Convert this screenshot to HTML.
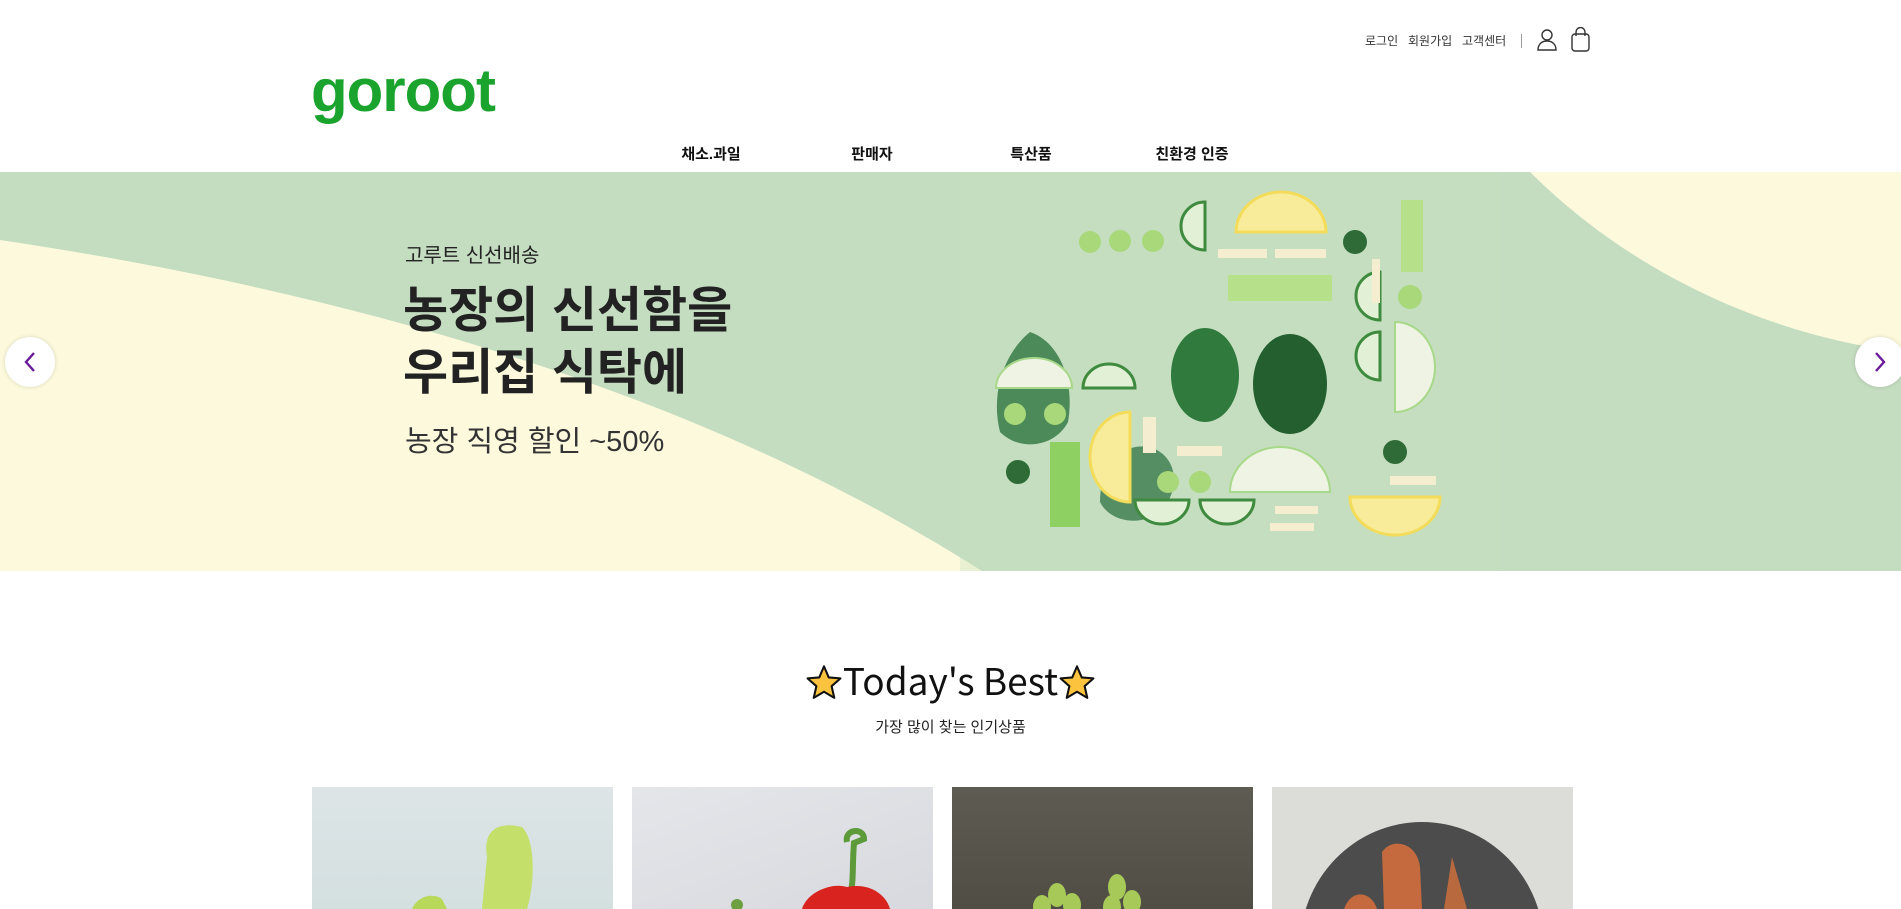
<!DOCTYPE html>
<html><head><meta charset="utf-8">
<style>
*{margin:0;padding:0;box-sizing:border-box}
html,body{width:1901px;height:909px;overflow:hidden}
body{background:#fff;font-family:"Liberation Sans","Noto Sans CJK KR",sans-serif;color:#222;position:relative}
.abs{position:absolute}
.util{top:32px;font-size:12px;color:#333;white-space:nowrap}
.logo{left:311px;top:56px;font-size:60px;line-height:70px;font-weight:bold;color:#1aa32d;letter-spacing:-1px;font-family:"Liberation Sans",sans-serif}
.nav{top:143px;font-size:15px;font-weight:bold;color:#111;transform:translateX(-50%);white-space:nowrap}
.banner{left:0;top:172px;width:1901px;height:399px;background:#c4dcc0;overflow:hidden}
.btn{width:50px;height:50px;border-radius:50%;background:#fff;box-shadow:0 0 4px rgba(0,0,0,.15);top:337px}
.card{top:787px;width:301px;height:122px;overflow:hidden}
</style></head><body>
<div class="abs util" style="left:1365px">로그인</div>
<div class="abs util" style="left:1408px">회원가입</div>
<div class="abs util" style="left:1462px">고객센터</div>
<div class="abs" style="left:1521px;top:34px;width:1px;height:14px;background:#999"></div>
<svg class="abs" style="left:1536px;top:28px" width="22" height="24" viewBox="0 0 22 24" fill="none" stroke="#333" stroke-width="1.4"><circle cx="11" cy="7" r="5"/><path d="M2 22c0-6 4-9 9-9s9 3 9 9z"/></svg>
<svg class="abs" style="left:1571px;top:27px" width="19" height="25" viewBox="0 0 19 25" fill="none" stroke="#333" stroke-width="1.4"><path d="M5 9V5a4.5 4.5 0 0 1 9 0v4"/><rect x="1" y="7" width="17" height="17" rx="3"/></svg>
<div class="abs logo">goroot</div>
<div class="abs nav" style="left:711px">채소.과일</div>
<div class="abs nav" style="left:872px">판매자</div>
<div class="abs nav" style="left:1031px">특산품</div>
<div class="abs nav" style="left:1192px">친환경 인증</div>

<div class="abs banner">
<svg width="1901" height="399" viewBox="0 0 1901 399" style="position:absolute;left:0;top:0">
<path d="M0 68 C350 120 700 220 982 399 L0 399Z" fill="#fcf9dc"/>
<path d="M1530 0 C1620 90 1750 160 1901 180 L1901 0Z" fill="#fcf9dc"/>
<rect x="960" y="0" width="540" height="399" fill="#c8e2c0" opacity=".35"/>
<path d="M1000 260 C990 220 1005 180 1030 160 C1060 170 1075 210 1068 250 C1055 275 1020 280 1000 260Z" fill="#4d8a5a"/>
<path d="M1100 330 C1100 295 1120 270 1150 275 C1180 285 1180 320 1160 340 C1140 355 1110 350 1100 330Z" fill="#558e63"/>
<ellipse cx="1205" cy="203" rx="34" ry="47" fill="#2f7a3c"/>
<ellipse cx="1290" cy="212" rx="37" ry="50" fill="#235f2f"/>
<path d="M1236 60 A45 40 0 0 1 1326 60Z" fill="#f8ec9a" stroke="#f3dc5a" stroke-width="3"/>
<path d="M1130 240 A40 45 0 0 0 1130 330Z" fill="#f8ec9a" stroke="#f3dc5a" stroke-width="3"/>
<path d="M1350 325 A45 38 0 0 0 1440 325Z" fill="#f8ec9a" stroke="#f3dc5a" stroke-width="3"/>
<path d="M996 216 A38 30 0 0 1 1072 216Z" fill="#eef3e4" stroke="#a8d88a" stroke-width="2"/>
<path d="M1230 320 A50 45 0 0 1 1330 320Z" fill="#eef3e4" stroke="#a8d88a" stroke-width="2"/>
<path d="M1395 150 A40 45 0 0 1 1395 240Z" fill="#eef3e4" stroke="#a8d88a" stroke-width="2"/>
<path d="M1205 30 A24 24 0 0 0 1205 78Z" fill="#e2f0d6" stroke="#3e8a3e" stroke-width="3"/>
<path d="M1083 216 A26 24 0 0 1 1135 216Z" fill="#e2f0d6" stroke="#3e8a3e" stroke-width="3"/>
<path d="M1135 328 A27 24 0 0 0 1189 328Z" fill="#e2f0d6" stroke="#3e8a3e" stroke-width="3"/>
<path d="M1200 328 A27 24 0 0 0 1254 328Z" fill="#e2f0d6" stroke="#3e8a3e" stroke-width="3"/>
<path d="M1380 100 A24 24 0 0 0 1380 148Z" fill="#e2f0d6" stroke="#3e8a3e" stroke-width="3"/>
<path d="M1380 160 A24 24 0 0 0 1380 208Z" fill="#e2f0d6" stroke="#3e8a3e" stroke-width="3"/>
<g fill="#a8d87a"><circle cx="1090" cy="70" r="11"/><circle cx="1120" cy="69" r="11"/><circle cx="1153" cy="69" r="11"/><circle cx="1015" cy="242" r="11"/><circle cx="1055" cy="242" r="11"/><circle cx="1168" cy="310" r="11"/><circle cx="1200" cy="310" r="11"/><circle cx="1410" cy="125" r="12"/></g>
<rect x="1228" y="103" width="104" height="26" fill="#b6e08a"/>
<rect x="1401" y="28" width="22" height="72" fill="#b6e08a"/>
<rect x="1050" y="270" width="30" height="85" fill="#8fd062"/>
<g fill="#f4edcf"><rect x="1218" y="77" width="49" height="9"/><rect x="1275" y="77" width="51" height="9"/><rect x="1372" y="87" width="8" height="44"/><rect x="1143" y="245" width="13" height="36"/><rect x="1177" y="274" width="45" height="10"/><rect x="1390" y="304" width="46" height="9"/><rect x="1275" y="334" width="43" height="8"/><rect x="1270" y="351" width="44" height="8"/></g>
<g fill="#2e6b36"><circle cx="1355" cy="70" r="12"/><circle cx="1018" cy="300" r="12"/><circle cx="1395" cy="280" r="12"/></g>
</svg>
<div class="abs" style="left:405px;top:67px;font-size:20px;color:#222">고루트 신선배송</div>
<div class="abs" style="left:403px;top:108px;font-size:49px;font-weight:bold;line-height:62px;color:#222">농장의 신선함을<br>우리집 식탁에</div>
<div class="abs" style="left:405px;top:246px;font-size:29px;color:#333">농장 직영 할인 ~50%</div>
</div>
<div class="abs btn" style="left:5px"><svg width="50" height="50" viewBox="0 0 50 50"><path d="M29 16 L21 25 L29 34" fill="none" stroke="#6a1b9a" stroke-width="2.4"/></svg></div>
<div class="abs btn" style="left:1855px"><svg width="50" height="50" viewBox="0 0 50 50"><path d="M21 16 L29 25 L21 34" fill="none" stroke="#6a1b9a" stroke-width="2.4"/></svg></div>

<div class="abs" style="left:0;width:1901px;top:652px;text-align:center;font-size:37px;color:#111;white-space:nowrap;font-family:'Noto Sans CJK KR','Liberation Sans',sans-serif">
<svg width="38" height="38" viewBox="0 0 24 24" style="vertical-align:-7px"><path d="M12 1.5l3 7 7.4.6-5.6 4.9 1.7 7.4L12 17.5l-6.5 3.9 1.7-7.4L1.6 9.1 9 8.5z" fill="#fcc43e" stroke="#111" stroke-width="1.3" stroke-linejoin="round"/></svg>Today's Best<svg width="38" height="38" viewBox="0 0 24 24" style="vertical-align:-7px"><path d="M12 1.5l3 7 7.4.6-5.6 4.9 1.7 7.4L12 17.5l-6.5 3.9 1.7-7.4L1.6 9.1 9 8.5z" fill="#fcc43e" stroke="#111" stroke-width="1.3" stroke-linejoin="round"/></svg></div>
<div class="abs" style="left:0;width:1901px;top:716px;text-align:center;font-size:15px;color:#222">가장 많이 찾는 인기상품</div>

<div class="abs card" style="left:312px;background:linear-gradient(#dde5e6,#d4dfe0)"><svg width="301" height="122"><path d="M175 70 C170 40 190 35 210 40 C225 55 222 100 215 122 L170 122Z" fill="#c4e06a"/><path d="M100 122 C105 110 120 105 130 112 L135 122Z" fill="#b8d85a"/></svg></div>
<div class="abs card" style="left:632px;background:linear-gradient(160deg,#e4e6ea,#d7d9de)"><svg width="301" height="122"><path d="M215 55 C212 42 232 40 232 52 L222 56 C220 80 222 95 218 108" fill="none" stroke="#5c9a3a" stroke-width="6"/><path d="M170 122 C175 105 200 95 215 100 C240 95 255 110 258 122Z" fill="#d8231f"/><circle cx="105" cy="118" r="6" fill="#6da040"/></svg></div>
<div class="abs card" style="left:952px;background:linear-gradient(#5e5c52,#4f4d44)"><svg width="301" height="122"><g fill="#a7c957"><ellipse cx="105" cy="108" rx="9" ry="12"/><ellipse cx="120" cy="118" rx="9" ry="12"/><ellipse cx="90" cy="120" rx="9" ry="12"/><ellipse cx="165" cy="100" rx="9" ry="13"/><ellipse cx="180" cy="115" rx="9" ry="12"/><ellipse cx="160" cy="120" rx="9" ry="12"/></g></svg></div>
<div class="abs card" style="left:1272px;background:#dcdcd9"><svg width="301" height="122"><ellipse cx="150" cy="160" rx="122" ry="125" fill="#4b4c4b"/><path d="M110 65 C120 50 145 55 148 80 L150 122 L112 122Z" fill="#c46a3e"/><path d="M180 70 L195 122 L172 122Z" fill="#b9693e"/><path d="M72 122 C80 100 100 105 105 122Z" fill="#c46a3e"/></svg></div>
</body></html>
